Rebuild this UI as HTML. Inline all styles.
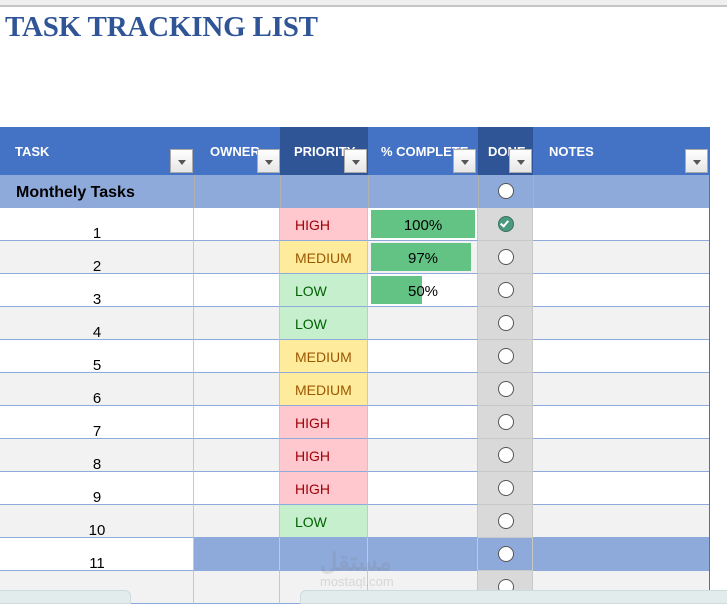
<!DOCTYPE html>
<html><head><meta charset="utf-8"><style>
*{margin:0;padding:0;box-sizing:border-box}
body{width:727px;height:602px;overflow:hidden;background:#fff;position:relative;font-family:"Liberation Sans",Arial,sans-serif}
.a{position:absolute}
.colbar{left:0;top:0;width:727px;height:7px;background:#efefef;border-bottom:2px solid #c6c6c6}
.title{left:5px;top:11px;font-family:"Liberation Serif",serif;font-weight:bold;font-size:29px;color:#2f5597;letter-spacing:-0.2px}
.hd{top:127px;height:48px;background:#4472c4;color:#fff;font-size:13px;font-weight:bold;padding:17px 0 0 0}
.hd.dk{background:#2f5597}
.dd{width:23px;height:24px;top:149px;background:linear-gradient(#fff,#e6e6e6);border:1px solid #aaa}
.dd:after{content:"";position:absolute;left:7px;top:10px;border-left:4px solid transparent;border-right:4px solid transparent;border-top:5px solid #555}
.cell{height:33px;border-bottom:1px solid #8ea9db;border-right:1px solid #c8c8c8}
.num{font-size:15px;text-align:center;padding-top:17px}
.pr{font-size:14px;padding:9px 0 0 15px}
.H{background:#ffc7ce;color:#9c0006}.M{background:#ffeb9c;color:#9c5700}.L{background:#c6efce;color:#006100}
.bar{background:#63c384;height:28px}
.pct{font-size:15px;text-align:center;width:104px}
.rad{width:16px;height:16px;border-radius:50%;background:#fff;border:1px solid #555}
.chk{width:16px;height:16px;border-radius:50%;background:#4a9a80;border:1px solid #3a7060}
.tab{top:590px;height:14px;background:#e2ecec;border:1px solid #cfdada;border-radius:6px 6px 0 0}
</style></head><body>
<div class="a colbar"></div>
<div class="a title">TASK TRACKING LIST</div>

<div class="a hd" style="left:0;width:194px;padding-left:15px">TASK</div>
<div class="a hd" style="left:194px;width:86px;padding-left:16px">OWNER</div>
<div class="a hd dk" style="left:280px;width:88px;padding-left:14px">PRIORITY</div>
<div class="a hd" style="left:368px;width:110px;padding-left:13px">% COMPLETE</div>
<div class="a hd dk" style="left:478px;width:55px;padding-left:10px">DONE</div>
<div class="a hd" style="left:533px;width:177px;padding-left:16px">NOTES</div>
<div class="a dd" style="left:170px"></div>
<div class="a dd" style="left:257px"></div>
<div class="a dd" style="left:344px"></div>
<div class="a dd" style="left:453px"></div>
<div class="a dd" style="left:509px"></div>
<div class="a dd" style="left:685px"></div>

<div class="a" style="left:0;top:175px;width:710px;height:33px;background:#8eaadb;border-bottom:1px solid #8ea9db"></div>
<div class="a" style="left:16px;top:184px;font-size:16px;font-weight:bold">Monthely Tasks</div>
<div class="a" style="left:194px;top:175px;width:1px;height:33px;background:#b0b0b0"></div>
<div class="a" style="left:280px;top:175px;width:1px;height:33px;background:#b0b0b0"></div>
<div class="a" style="left:368px;top:175px;width:1px;height:33px;background:#b0b0b0"></div>
<div class="a" style="left:478px;top:175px;width:1px;height:33px;background:#b0b0b0"></div>
<div class="a" style="left:533px;top:175px;width:1px;height:33px;background:#b0b0b0"></div>
<div class="a rad" style="left:498px;top:183px"></div>

<div id="rows"></div>
<script>
var pr=["HIGH","MEDIUM","LOW","LOW","MEDIUM","MEDIUM","HIGH","HIGH","HIGH","LOW","",""];
var h="";
for(var i=0;i<12;i++){
 var t=208+i*33,bg=(i%2)?"#f2f2f2":"#fff";
 var blue=(i==10);
 var cols=[[0,194],[194,86],[280,88],[368,110],[533,177]];
 for(var c=0;c<cols.length;c++){
  var b=bg; if(blue&&c>0)b="#8eaadb";
  h+='<div class="a cell" style="left:'+cols[c][0]+'px;top:'+t+'px;width:'+cols[c][1]+'px;background:'+b+'"></div>';
 }
 h+='<div class="a cell" style="left:478px;top:'+t+'px;width:55px;background:'+(blue?"#8eaadb":"#d9d9d9")+';border-bottom-color:#c8c8c8"></div>';
 if(i<11)h+='<div class="a num" style="left:0;top:'+t+'px;width:194px">'+(i+1)+'</div>';
 if(pr[i]){var k=pr[i][0];h+='<div class="a cell pr '+k+'" style="left:280px;top:'+t+'px;width:88px">'+pr[i]+'</div>';}
 if(i<3){var w=[104,100,51][i];h+='<div class="a bar" style="left:371px;top:'+(t+2)+'px;width:'+w+'px"></div><div class="a pct" style="left:371px;top:'+(t+9)+'px">'+["100%","97%","50%"][i]+'</div>';}
 h+='<div class="a '+(i==0?"chk":"rad")+'" style="left:498px;top:'+(t+8)+'px"></div>';
 if(i==0)h+='<div class="a" style="left:502px;top:'+(t+11)+'px;width:5px;height:8px;border-right:2px solid #fff;border-bottom:2px solid #fff;transform:rotate(40deg)"></div>';
}
h+='<div class="a" style="left:709px;top:127px;width:1px;height:463px;background:#4472c4"></div>';
document.getElementById("rows").innerHTML=h;
</script>
<div class="a" style="left:320px;top:548px;font-size:24px;font-weight:bold;color:rgba(120,120,120,.18)">مستقل</div>
<div class="a" style="left:320px;top:574px;font-size:13px;color:rgba(120,120,120,.22)">mostaql.com</div>
<div class="a tab" style="left:-4px;width:135px"></div>
<div class="a tab" style="left:300px;width:440px"></div>
</body></html>
